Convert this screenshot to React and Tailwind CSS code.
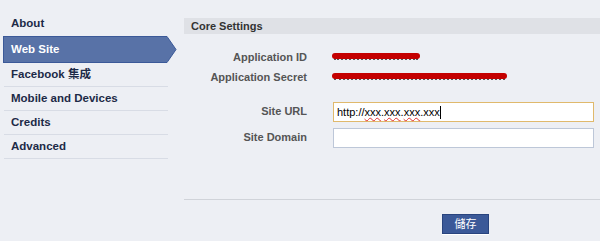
import React from 'react';

const NAV = ['About', 'Web Site', 'Facebook 集成', 'Mobile and Devices', 'Credits', 'Advanced'];

function Scribble({ width }) {
  return (
    <div className="relative h-[12px]" style={{ width }}>
      <span className="absolute left-[2px] right-[2px] top-[5px] h-[4px] border-b-2 border-dotted border-[#555]" />
      <span className="absolute left-0 right-0 top-[2px] h-[6px] rounded-full bg-[#c40000]" />
    </div>
  );
}

export default function App() {
  const font = { fontFamily: '"Liberation Sans", "Noto Sans CJK TC", sans-serif' };
  return (
    <div className="w-[600px] h-[241px] bg-[#edeff4] flex text-[11px] text-[#333]" style={font}>
      {/* Sidebar */}
      <div className="w-[184px] shrink-0 pt-[12px]">
        {NAV.map((label) =>
          label === 'Web Site' ? (
            <div key={label} className="relative h-[27px] ml-[3px] w-[164px]">
              <div className="absolute inset-0 bg-[#5872a7] border border-[#3b5998] border-r-0 flex items-center pl-[7px] font-bold text-white text-[11.5px]">
                {label}
              </div>
              <svg className="absolute left-[163px] top-0" width="11" height="27" viewBox="0 0 11 27">
                <path d="M0 0.5 H1 L10 13.5 L1 26.5 H0 Z" fill="#5872a7" stroke="#3b5998" strokeWidth="1" />
                <rect x="0" y="1" width="1.5" height="25" fill="#5872a7" />
              </svg>
            </div>
          ) : (
            <div
              key={label}
              className={`h-[24px] ml-[4px] w-[164px] flex items-center pl-[7px] font-bold text-[11.5px] text-[#1c2a47] ${
                label === 'About' ? '' : 'border-b border-[#d8dce5]'
              }`}
            >
              {label}
            </div>
          )
        )}
      </div>

      {/* Main */}
      <div className="flex-1 pt-[18px] flex flex-col">
        <div className="h-[16px] bg-[#dfe1e6] flex items-center pl-[7px] font-bold text-[#333]">Core Settings</div>

        <div className="flex flex-col mt-[13px]">
          <div className="flex items-center h-[20px]">
            <div className="w-[123px] text-right font-bold text-[#555]">Application ID</div>
            <div className="ml-[25px]"><Scribble width={88} /></div>
          </div>
          <div className="flex items-center h-[20px]">
            <div className="w-[123px] text-right font-bold text-[#555]">Application Secret</div>
            <div className="ml-[25px]"><Scribble width={175} /></div>
          </div>

          <div className="flex items-start mt-[15px]">
            <div className="w-[123px] text-right font-bold text-[#555] pt-[1px]">Site URL</div>
            <div className="ml-[26px] w-[261px] h-[20px] bg-white border border-[#e0b96c] flex items-center pl-[3px] text-[11px] text-black">
              <span>http://</span>
              <span className="underline decoration-wavy decoration-[#e03030] decoration-1">xxx</span>
              <span>.</span>
              <span className="underline decoration-wavy decoration-[#e03030] decoration-1">xxx</span>
              <span>.</span>
              <span className="underline decoration-wavy decoration-[#e03030] decoration-1">xxx</span>
              <span>.xxx</span>
              <span className="w-px h-[13px] bg-black" />
            </div>
          </div>
          <div className="flex items-start mt-[6px]">
            <div className="w-[123px] text-right font-bold text-[#555] pt-[1px]">Site Domain</div>
            <div className="ml-[26px] w-[261px] h-[20px] bg-white border border-[#bdc7d8]" />
          </div>
        </div>

        <div className="mt-[51px] h-px bg-[#d0d3d9]" />

        <div className="mt-[14px] pl-[258px]">
          <button className="w-[47px] h-[20px] bg-[#3b5998] border border-[#29447e] text-white text-[11px] flex items-center justify-center shadow-[0_1px_0_#fff]">
            儲存
          </button>
        </div>
      </div>
    </div>
  );
}
